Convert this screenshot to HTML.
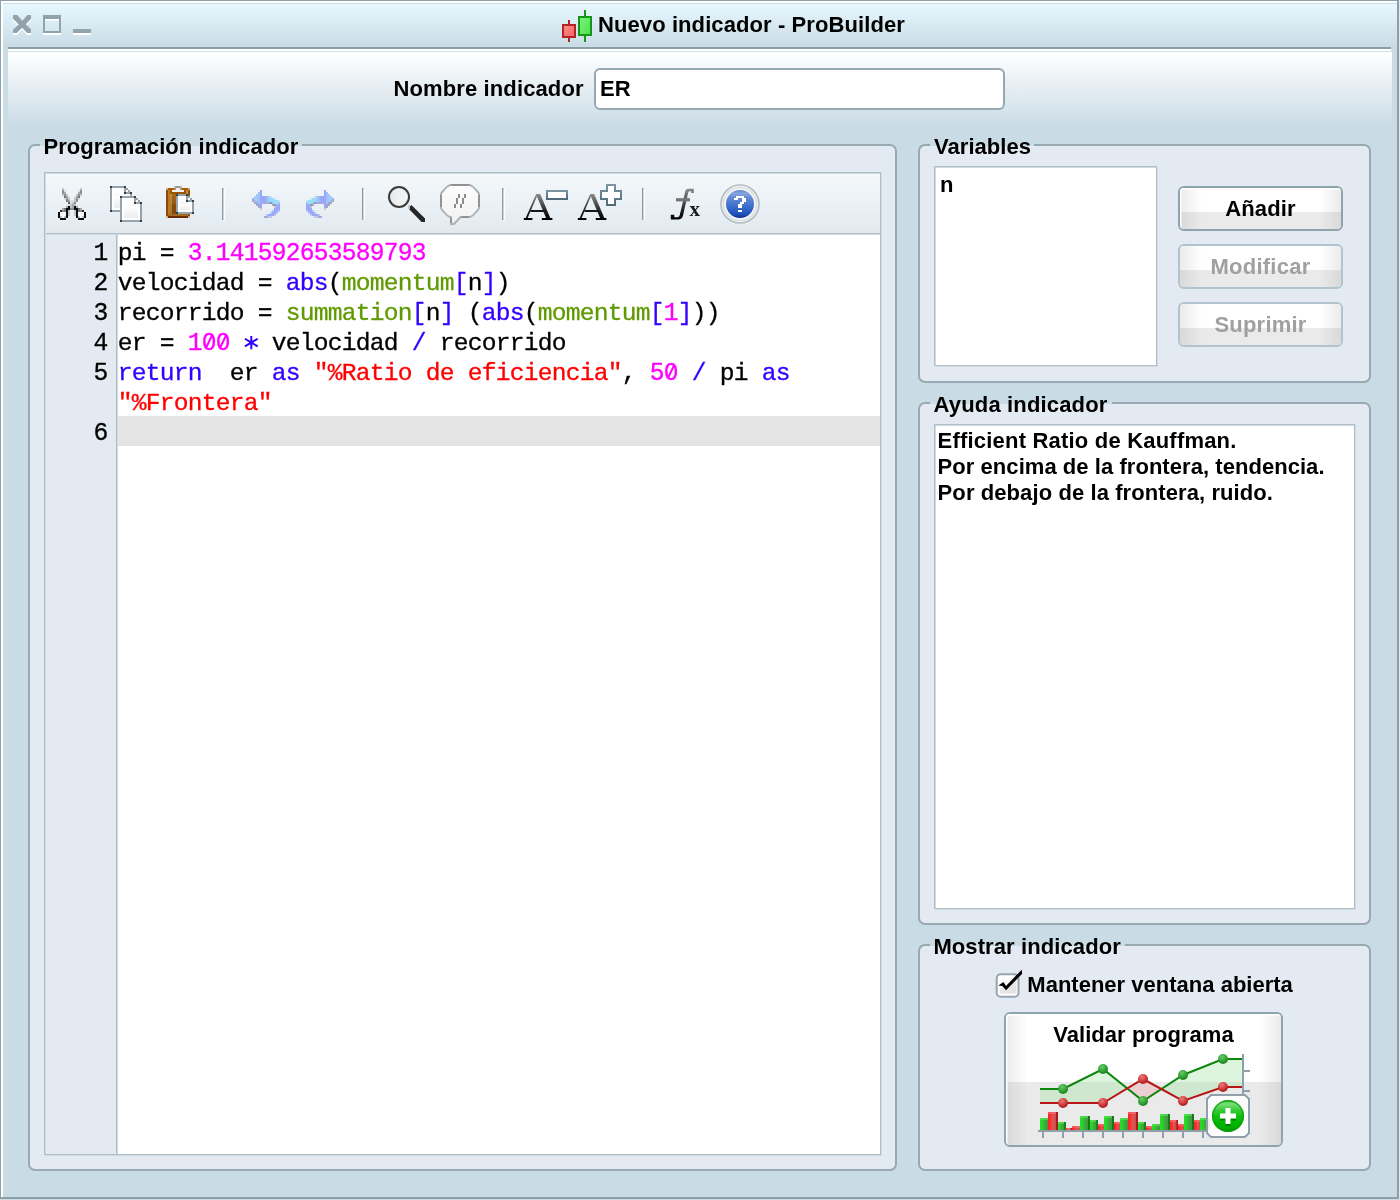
<!DOCTYPE html>
<html lang="es">
<head>
<meta charset="utf-8">
<title>Nuevo indicador - ProBuilder</title>
<style>
*{box-sizing:border-box;margin:0;padding:0}
html,body{width:1400px;height:1200px;overflow:hidden;background:#c9dbe5}
body{will-change:transform;font-variant-ligatures:none;font-feature-settings:"liga" 0,"clig" 0;position:relative;letter-spacing:0.05px;font-family:"Liberation Sans",sans-serif;font-weight:bold;font-size:22px;color:#000;line-height:26px}
.abs{position:absolute}
/* window frame */
#frame-gray{left:0;top:0;width:1399px;height:1199px;border:solid #8f9fa8;border-width:1px 2px 2px 1px}
#frame-white{left:1px;top:1px;width:1396px;height:1196px;border:solid #fff;border-width:2px 0 0 2px}
#outer-r{left:1399px;top:0;width:1px;height:1200px;background:#dcebf2}
#outer-b{left:0;top:1199px;width:1400px;height:1px;background:#c9dbe5}
#titlebar{left:3px;top:3px;width:1394px;height:44px;background:linear-gradient(#e7f9ff 0,#e5f6fd 3px,#c9dbe5 100%)}
#titlebar-top{left:3px;top:3px;width:1394px;height:1px;background:#c5dbe6}
#tsep{left:8px;top:47px;width:1383px;height:2px;background:#8a9ca6}
#tsep2{left:8px;top:49px;width:1383px;height:2px;background:#fff}
#tsep3{left:8px;top:51px;width:1384px;height:1px;background:#cfe0e9}
#content{left:8px;top:52px;width:1384px;height:1145px;background:linear-gradient(#ffffff 0,#c9dbe5 76px,#c9dbe5 100%)}
.t{white-space:pre}
/* fieldsets */
.fs{border:2px solid #99a9b1;border-radius:7px;background:#e3eaf2}
.legend{height:26px;line-height:26px;white-space:pre}
.lgap{height:2px;background:#c9dbe5}
.box{border:1px solid #b0bfc7;box-shadow:inset 1px 1px 0 #cfdae1,1px 1px 0 #cfdae1;background:#fff}
/* buttons */
.btn{border:2px solid #8fa3ad;border-radius:6px;overflow:hidden;background:#fff;text-align:center}
.btn.dis{border-color:#b1c4ce;color:#a0a0a0}
.btn .hi{position:absolute;left:0;top:0;width:100%;background:linear-gradient(90deg,#ebebeb 0,#fff 22px,#fff calc(100% - 22px),#ebebeb 100%)}
.btn .lo{position:absolute;left:0;bottom:0;width:100%;background:linear-gradient(90deg,#d9d9d9 0,#eaeaea 22px,#eaeaea calc(100% - 22px),#d9d9d9 100%)}
.btn.en::after{content:"";position:absolute;left:0;top:0;right:0;bottom:0;border-radius:4px;box-shadow:inset 1.5px 1.5px 0 #fff}
.btn .lbl{position:absolute;left:0;width:100%;text-align:center;white-space:pre}
/* code */
#code,.ln{font-family:"Liberation Mono",monospace;font-weight:normal;font-size:24.6px;letter-spacing:-0.7625px;line-height:30px;white-space:pre;color:#000;-webkit-text-stroke:0.3px currentColor}
.ln{text-align:right}
.n{color:#ff00ff}.n,.d{display:inline-block;transform:scaleY(1.08);transform-origin:0 21.56px}.d{transform:translateX(-0.6px) scaleY(1.08)}.k{color:#3200ff}.f{color:#5f9a00}.s{color:#ff0000}.b{color:#3200ff}
</style>
</head>
<body>
<div class="abs" id="titlebar"></div>
<div class="abs" id="titlebar-top"></div>
<div class="abs" id="content"></div>
<div class="abs" id="tsep"></div>
<div class="abs" id="tsep2"></div>
<div class="abs" id="tsep3"></div>
<div class="abs" id="frame-white"></div>
<div class="abs" id="frame-gray"></div>
<div class="abs" id="outer-r"></div>
<div class="abs" id="outer-b"></div>

<!-- title bar controls -->
<svg class="abs" style="left:10px;top:12px" width="90" height="26" viewBox="10 12 90 26">
  <g fill="#fff">
    <path transform="translate(0 2)" d="M13 15 L17.200 15 L22.300 20.800 L27.500 15 L31 15 L31 18.800 L25.900 24.200 L31 29.400 L31 33 L27.200 33 L22 27.800 L16.800 33 L13 33 L13 29.800 L18.700 24.400 L13 18.800 Z"/>
    <rect x="43" y="33" width="18" height="2"/><rect x="45" y="19" width="14" height="1.500"/>
    <rect x="73" y="31" width="18" height="4"/>
  </g>
  <g fill="#93a3ab">
    <path d="M13 15 L17.200 15 L22.300 20.800 L27.500 15 L31 15 L31 18.800 L25.900 24.200 L31 29.400 L31 33 L27.200 33 L22 27.800 L16.800 33 L13 33 L13 29.800 L18.700 24.400 L13 18.800 Z"/>
    <path d="M43 15 H61 V33 H43 Z M45 19 V31 H59 V19 Z" fill-rule="evenodd"/>
    <rect x="73" y="29" width="18" height="4"/>
  </g>
</svg>

<!-- title icon + text -->
<svg class="abs" style="left:560px;top:8px" width="36" height="38" viewBox="560 8 36 38">
  <defs>
    <linearGradient id="cr" x1="0" y1="0" x2="1" y2="1"><stop offset="0" stop-color="#ff8c8c"/><stop offset="1" stop-color="#f26464"/></linearGradient>
    <linearGradient id="cg" x1="0" y1="0" x2="1" y2="1"><stop offset="0" stop-color="#7af57a"/><stop offset="1" stop-color="#4fe04f"/></linearGradient>
  </defs>
  <rect x="568" y="20" width="2" height="22" fill="#b32424"/>
  <rect x="563" y="25" width="12" height="12" fill="url(#cr)" stroke="#b32424" stroke-width="2"/>
  <rect x="584" y="10" width="2" height="32" fill="#169616"/>
  <rect x="579" y="17" width="12" height="18" fill="url(#cg)" stroke="#169616" stroke-width="2"/>
</svg>
<div class="abs t" id="title" style="left:598px;top:12px;letter-spacing:0.09px">Nuevo indicador - ProBuilder</div>

<!-- name row -->
<div class="abs t" style="left:393.5px;top:76px;letter-spacing:0.12px">Nombre indicador</div>
<div class="abs" style="left:594px;top:68px;width:411px;height:41.5px;border:2px solid #96a8b1;border-radius:6px;background:#fff"></div>
<div class="abs t" style="left:600px;top:76px">ER</div>

<!-- Programación fieldset -->
<div class="abs fs" style="left:28px;top:144px;width:869px;height:1027px"></div>
<div class="abs lgap" style="left:40px;top:144px;width:262px"></div>
<div class="abs legend" style="left:43.4px;top:134px;letter-spacing:0.09px">Programación indicador</div>

<!-- editor box -->
<div class="abs box" style="left:44px;top:172px;width:837px;height:983px"></div>
<div class="abs" id="toolbar" style="left:46px;top:174px;width:834px;height:59px;background:linear-gradient(#f4f8fb,#e2eaf0)"></div>
<div class="abs" style="left:46px;top:233px;width:834px;height:2px;background:linear-gradient(#b0bfc7 50%,#cfdae1 50%)"></div>
<!--TOOLBAR--><svg class="abs" id="tbicons" style="left:46px;top:174px" width="834" height="59" viewBox="46 174 834 59"><defs>
<linearGradient id="pg" x1="0" y1="0" x2="0" y2="1"><stop offset="0" stop-color="#fff"/><stop offset="1" stop-color="#ececec"/></linearGradient>
<linearGradient id="cb" x1="0" y1="0" x2="0" y2="1"><stop offset="0" stop-color="#ac6e20"/><stop offset="0.5" stop-color="#9a5c18"/><stop offset="0.55" stop-color="#8a4c10"/><stop offset="1" stop-color="#82440e"/></linearGradient>
<linearGradient id="cbs" x1="0" y1="0" x2="0" y2="1"><stop offset="0" stop-color="#cc9440"/><stop offset="1" stop-color="#a66c22"/></linearGradient>
<linearGradient id="ag" x1="0" y1="0" x2="0" y2="1"><stop offset="0" stop-color="#8a8a8a"/><stop offset="0.5" stop-color="#444"/><stop offset="0.8" stop-color="#111"/><stop offset="1" stop-color="#000"/></linearGradient>
<linearGradient id="ag2" gradientUnits="userSpaceOnUse" x1="0" y1="194" x2="0" y2="220"><stop offset="0" stop-color="#8c8c8c"/><stop offset="0.35" stop-color="#555"/><stop offset="0.7" stop-color="#1c1c1c"/><stop offset="1" stop-color="#000"/></linearGradient>
<linearGradient id="hb" x1="0" y1="0" x2="0" y2="1"><stop offset="0" stop-color="#5a84d2"/><stop offset="0.12" stop-color="#86a6de"/><stop offset="0.3" stop-color="#6088d4"/><stop offset="0.6" stop-color="#3c6ccc"/><stop offset="0.88" stop-color="#1e50b8"/><stop offset="1" stop-color="#0a2a8a"/></linearGradient>
<linearGradient id="gl" x1="0" y1="0" x2="1" y2="0"><stop offset="0" stop-color="#e4e6e8"/><stop offset="0.5" stop-color="#eef0f1"/><stop offset="1" stop-color="#f4f5f6"/></linearGradient>
<linearGradient id="bb" x1="0" y1="0" x2="0" y2="1"><stop offset="0" stop-color="#fdfdfd"/><stop offset="1" stop-color="#f1f1f1"/></linearGradient>
<linearGradient id="pl" x1="0" y1="0" x2="0" y2="1"><stop offset="0" stop-color="#7a94a2"/><stop offset="1" stop-color="#506a7a"/></linearGradient>
<filter id="soft2" x="-5%" y="-5%" width="110%" height="110%"><feGaussianBlur stdDeviation="0.3"/></filter>
<filter id="soft" x="-5%" y="-5%" width="110%" height="110%"><feGaussianBlur stdDeviation="0.45"/></filter>
</defs><g filter="url(#soft)"><rect x="62" y="188" width="2" height="2" fill="#c2c4c6"/><rect x="80" y="188" width="2" height="2" fill="#c2c4c6"/><rect x="62" y="190" width="2" height="2" fill="#8e9092"/><rect x="64" y="190" width="2" height="2" fill="#dcdfe1"/><rect x="78" y="190" width="2" height="2" fill="#dcdfe1"/><rect x="80" y="190" width="2" height="2" fill="#8e9092"/><rect x="62" y="192" width="2" height="2" fill="#8e9092"/><rect x="64" y="192" width="2" height="2" fill="#a6a8aa"/><rect x="78" y="192" width="2" height="2" fill="#a6a8aa"/><rect x="80" y="192" width="2" height="2" fill="#8e9092"/><rect x="62" y="194" width="2" height="2" fill="#c2c4c6"/><rect x="64" y="194" width="2" height="2" fill="#8e9092"/><rect x="66" y="194" width="2" height="2" fill="#c2c4c6"/><rect x="76" y="194" width="2" height="2" fill="#c2c4c6"/><rect x="78" y="194" width="2" height="2" fill="#8e9092"/><rect x="80" y="194" width="2" height="2" fill="#c2c4c6"/><rect x="64" y="196" width="2" height="2" fill="#767778"/><rect x="66" y="196" width="2" height="2" fill="#a6a8aa"/><rect x="68" y="196" width="2" height="2" fill="#dcdfe1"/><rect x="74" y="196" width="2" height="2" fill="#dcdfe1"/><rect x="76" y="196" width="2" height="2" fill="#a6a8aa"/><rect x="78" y="196" width="2" height="2" fill="#767778"/><rect x="64" y="198" width="2" height="2" fill="#dcdfe1"/><rect x="66" y="198" width="2" height="2" fill="#8e9092"/><rect x="68" y="198" width="2" height="2" fill="#c2c4c6"/><rect x="74" y="198" width="2" height="2" fill="#c2c4c6"/><rect x="76" y="198" width="2" height="2" fill="#8e9092"/><rect x="78" y="198" width="2" height="2" fill="#dcdfe1"/><rect x="66" y="200" width="2" height="2" fill="#767778"/><rect x="68" y="200" width="2" height="2" fill="#a6a8aa"/><rect x="70" y="200" width="4" height="2" fill="#dcdfe1"/><rect x="74" y="200" width="2" height="2" fill="#c2c4c6"/><rect x="76" y="200" width="2" height="2" fill="#8e9092"/><rect x="68" y="202" width="2" height="2" fill="#5e5f60"/><rect x="70" y="202" width="2" height="2" fill="#dcdfe1"/><rect x="72" y="202" width="2" height="2" fill="#c2c4c6"/><rect x="74" y="202" width="2" height="2" fill="#8e9092"/><rect x="68" y="204" width="2" height="2" fill="#dcdfe1"/><rect x="70" y="204" width="2" height="2" fill="#c2c4c6"/><rect x="72" y="204" width="2" height="2" fill="#a6a8aa"/><rect x="74" y="204" width="2" height="2" fill="#c2c4c6"/><rect x="66" y="206" width="2" height="2" fill="#a6a8aa"/><rect x="68" y="206" width="2" height="2" fill="#0a0a0a"/><rect x="70" y="206" width="2" height="2" fill="#c2c4c6"/><rect x="72" y="206" width="2" height="2" fill="#a6a8aa"/><rect x="74" y="206" width="2" height="2" fill="#0a0a0a"/><rect x="76" y="206" width="2" height="2" fill="#a6a8aa"/><rect x="62" y="208" width="2" height="2" fill="#a6a8aa"/><rect x="64" y="208" width="2" height="2" fill="#767778"/><rect x="66" y="208" width="4" height="2" fill="#0a0a0a"/><rect x="70" y="208" width="4" height="2" fill="#8e9092"/><rect x="74" y="208" width="4" height="2" fill="#0a0a0a"/><rect x="78" y="208" width="2" height="2" fill="#767778"/><rect x="80" y="208" width="2" height="2" fill="#a6a8aa"/><rect x="60" y="210" width="2" height="2" fill="#2a2a2a"/><rect x="62" y="210" width="2" height="2" fill="#8e9092"/><rect x="64" y="210" width="2" height="2" fill="#767778"/><rect x="66" y="210" width="2" height="2" fill="#0a0a0a"/><rect x="68" y="210" width="2" height="2" fill="#c2c4c6"/><rect x="74" y="210" width="2" height="2" fill="#c2c4c6"/><rect x="76" y="210" width="2" height="2" fill="#0a0a0a"/><rect x="78" y="210" width="2" height="2" fill="#767778"/><rect x="80" y="210" width="2" height="2" fill="#8e9092"/><rect x="82" y="210" width="2" height="2" fill="#2a2a2a"/><rect x="58" y="212" width="2" height="2" fill="#0a0a0a"/><rect x="60" y="212" width="6" height="2" fill="#f6f8fa"/><rect x="66" y="212" width="2" height="2" fill="#0a0a0a"/><rect x="68" y="212" width="2" height="2" fill="#c2c4c6"/><rect x="74" y="212" width="2" height="2" fill="#c2c4c6"/><rect x="76" y="212" width="2" height="2" fill="#0a0a0a"/><rect x="78" y="212" width="6" height="2" fill="#f6f8fa"/><rect x="84" y="212" width="2" height="2" fill="#0a0a0a"/><rect x="58" y="214" width="2" height="2" fill="#0a0a0a"/><rect x="60" y="214" width="6" height="2" fill="#f6f8fa"/><rect x="66" y="214" width="2" height="2" fill="#0a0a0a"/><rect x="68" y="214" width="2" height="2" fill="#c2c4c6"/><rect x="74" y="214" width="2" height="2" fill="#c2c4c6"/><rect x="76" y="214" width="2" height="2" fill="#0a0a0a"/><rect x="78" y="214" width="6" height="2" fill="#f6f8fa"/><rect x="84" y="214" width="2" height="2" fill="#0a0a0a"/><rect x="58" y="216" width="2" height="2" fill="#0a0a0a"/><rect x="60" y="216" width="2" height="2" fill="#c2c4c6"/><rect x="62" y="216" width="2" height="2" fill="#f6f8fa"/><rect x="64" y="216" width="2" height="2" fill="#c2c4c6"/><rect x="66" y="216" width="2" height="2" fill="#0a0a0a"/><rect x="76" y="216" width="2" height="2" fill="#0a0a0a"/><rect x="78" y="216" width="2" height="2" fill="#c2c4c6"/><rect x="80" y="216" width="2" height="2" fill="#f6f8fa"/><rect x="82" y="216" width="2" height="2" fill="#c2c4c6"/><rect x="84" y="216" width="2" height="2" fill="#0a0a0a"/><rect x="60" y="218" width="6" height="2" fill="#0a0a0a"/><rect x="78" y="218" width="6" height="2" fill="#0a0a0a"/></g><g filter="url(#soft)"><path d="M111 187 h14 l6 6 v18 h-20 z" fill="#fff"/><rect x="114" y="190" width="12" height="18" fill="url(#pg)"/><rect x="114" y="196" width="14" height="12" fill="url(#pg)"/><rect x="110" y="186" width="16" height="2" fill="#97a3ac"/><rect x="110" y="186" width="2" height="26" fill="#97a3ac"/><rect x="110" y="210" width="22" height="2" fill="#97a3ac"/><rect x="130" y="192" width="2" height="20" fill="#97a3ac"/><rect x="124" y="188" width="2" height="6" fill="#97a3ac"/><rect x="124" y="192" width="6" height="2" fill="#97a3ac"/><rect x="126" y="188" width="2" height="2" fill="#97a3ac"/><rect x="128" y="190" width="2" height="2" fill="#97a3ac"/><rect x="126" y="190" width="2" height="2" fill="#fff"/><rect x="110" y="186" width="2" height="2" fill="#2f3f4a"/><rect x="124" y="186" width="2" height="2" fill="#2f3f4a"/><rect x="124" y="192" width="2" height="2" fill="#2f3f4a"/><rect x="130" y="192" width="2" height="2" fill="#2f3f4a"/><rect x="110" y="210" width="2" height="2" fill="#2f3f4a"/><rect x="130" y="210" width="2" height="2" fill="#2f3f4a"/><path d="M121 197 h14 l6 6 v18 h-20 z" fill="#fff"/><rect x="124" y="200" width="12" height="18" fill="url(#pg)"/><rect x="124" y="206" width="14" height="12" fill="url(#pg)"/><rect x="120" y="196" width="16" height="2" fill="#97a3ac"/><rect x="120" y="196" width="2" height="26" fill="#97a3ac"/><rect x="120" y="220" width="22" height="2" fill="#97a3ac"/><rect x="140" y="202" width="2" height="20" fill="#97a3ac"/><rect x="134" y="198" width="2" height="6" fill="#97a3ac"/><rect x="134" y="202" width="6" height="2" fill="#97a3ac"/><rect x="136" y="198" width="2" height="2" fill="#97a3ac"/><rect x="138" y="200" width="2" height="2" fill="#97a3ac"/><rect x="136" y="200" width="2" height="2" fill="#fff"/><rect x="120" y="196" width="2" height="2" fill="#2f3f4a"/><rect x="134" y="196" width="2" height="2" fill="#2f3f4a"/><rect x="134" y="202" width="2" height="2" fill="#2f3f4a"/><rect x="140" y="202" width="2" height="2" fill="#2f3f4a"/><rect x="120" y="220" width="2" height="2" fill="#2f3f4a"/><rect x="140" y="220" width="2" height="2" fill="#2f3f4a"/></g><g filter="url(#soft)"><rect x="166" y="188" width="24" height="30" fill="url(#cb)"/><rect x="166" y="188" width="2" height="30" fill="#8c4a08"/><rect x="168" y="190" width="2" height="26" fill="#b87a2a"/><rect x="170" y="190" width="2" height="26" fill="url(#cbs)"/><rect x="188" y="188" width="2" height="30" fill="#9a5004"/><rect x="184" y="190" width="4" height="6" fill="#c08a3c"/><rect x="166" y="188" width="24" height="2" fill="#a85c04"/><rect x="170" y="190" width="16" height="4" fill="#9a5606"/><rect x="168" y="214" width="20" height="2" fill="#a46c22"/><rect x="166" y="216" width="24" height="2" fill="#6e2c00"/><rect x="166" y="188" width="2" height="2" fill="#d4a878"/><rect x="188" y="188" width="2" height="2" fill="#d4a878"/><rect x="166" y="216" width="2" height="2" fill="#d4a878"/><rect x="188" y="216" width="2" height="2" fill="#d4a878"/><rect x="174" y="186" width="8" height="2" fill="#b4b6b8"/><rect x="176" y="186" width="4" height="2" fill="#9a9c9e"/><rect x="174" y="188" width="2" height="2" fill="#c09058"/><rect x="180" y="188" width="2" height="2" fill="#c09058"/><rect x="176" y="188" width="4" height="2" fill="#f0f0f0"/><rect x="172" y="190" width="12" height="2" fill="#f2f5f8"/><path d="M177 195 h10 l6 6 v12 h-16 z" fill="#fff"/><rect x="180" y="198" width="8" height="12" fill="url(#pg)"/><rect x="180" y="204" width="10" height="6" fill="url(#pg)"/><rect x="176" y="194" width="12" height="2" fill="#97a3ac"/><rect x="176" y="194" width="2" height="20" fill="#97a3ac"/><rect x="176" y="212" width="18" height="2" fill="#97a3ac"/><rect x="192" y="200" width="2" height="14" fill="#97a3ac"/><rect x="186" y="196" width="2" height="6" fill="#97a3ac"/><rect x="186" y="200" width="6" height="2" fill="#97a3ac"/><rect x="188" y="196" width="2" height="2" fill="#97a3ac"/><rect x="190" y="198" width="2" height="2" fill="#97a3ac"/><rect x="188" y="198" width="2" height="2" fill="#fff"/><rect x="176" y="194" width="2" height="2" fill="#2f3f4a"/><rect x="186" y="194" width="2" height="2" fill="#2f3f4a"/><rect x="186" y="200" width="2" height="2" fill="#2f3f4a"/><rect x="192" y="200" width="2" height="2" fill="#2f3f4a"/><rect x="176" y="212" width="2" height="2" fill="#2f3f4a"/><rect x="192" y="212" width="2" height="2" fill="#2f3f4a"/></g><rect x="222" y="188" width="1.6" height="32" fill="#8b9ba4"/><rect x="223.6" y="189" width="1.6" height="31" fill="#fbfdfe"/><g filter="url(#soft)"><rect x="260" y="190" width="2" height="2" fill="#98a8f8"/><rect x="258" y="192" width="2" height="2" fill="#a0c0f8"/><rect x="260" y="192" width="2" height="2" fill="#98a8f8"/><rect x="256" y="194" width="2" height="2" fill="#a0c8f8"/><rect x="258" y="194" width="2" height="2" fill="#a0c0f8"/><rect x="260" y="194" width="2" height="2" fill="#98a8f8"/><rect x="254" y="196" width="2" height="2" fill="#a0d2f8"/><rect x="256" y="196" width="2" height="2" fill="#a0c8f8"/><rect x="258" y="196" width="2" height="2" fill="#a0c0f8"/><rect x="260" y="196" width="6" height="2" fill="#98a8f8"/><rect x="266" y="196" width="2" height="2" fill="#a0b8f8"/><rect x="268" y="196" width="2" height="2" fill="#aacaf8"/><rect x="270" y="196" width="2" height="2" fill="#c6e4f8"/><rect x="252" y="198" width="2" height="2" fill="#a0a8f0"/><rect x="254" y="198" width="2" height="2" fill="#a0d2f8"/><rect x="256" y="198" width="2" height="2" fill="#a0c8f8"/><rect x="258" y="198" width="2" height="2" fill="#a0c0f8"/><rect x="260" y="198" width="6" height="2" fill="#98a8f8"/><rect x="266" y="198" width="2" height="2" fill="#a0b8f8"/><rect x="268" y="198" width="2" height="2" fill="#98d0f8"/><rect x="270" y="198" width="4" height="2" fill="#98dcf8"/><rect x="274" y="198" width="2" height="2" fill="#c6e4f8"/><rect x="252" y="200" width="2" height="2" fill="#a8aaae"/><rect x="254" y="200" width="2" height="2" fill="#98c0f8"/><rect x="256" y="200" width="2" height="2" fill="#a0c8f8"/><rect x="258" y="200" width="2" height="2" fill="#a0c0f8"/><rect x="260" y="200" width="6" height="2" fill="#98a8f8"/><rect x="266" y="200" width="2" height="2" fill="#a0b8f8"/><rect x="268" y="200" width="2" height="2" fill="#98d0f8"/><rect x="270" y="200" width="8" height="2" fill="#98dcf8"/><rect x="278" y="200" width="2" height="2" fill="#c6e4f8"/><rect x="254" y="202" width="2" height="2" fill="#a8aaae"/><rect x="256" y="202" width="2" height="2" fill="#98a0f0"/><rect x="258" y="202" width="2" height="2" fill="#a0c0f8"/><rect x="260" y="202" width="2" height="2" fill="#98a8f8"/><rect x="262" y="202" width="8" height="2" fill="#a2aae0"/><rect x="270" y="202" width="2" height="2" fill="#8890c8"/><rect x="272" y="202" width="2" height="2" fill="#98c8f8"/><rect x="274" y="202" width="4" height="2" fill="#98dcf8"/><rect x="278" y="202" width="2" height="2" fill="#98c8f8"/><rect x="256" y="204" width="2" height="2" fill="#a8aaae"/><rect x="258" y="204" width="2" height="2" fill="#98a0f0"/><rect x="260" y="204" width="2" height="2" fill="#98a8f8"/><rect x="272" y="204" width="2" height="2" fill="#a8aaae"/><rect x="274" y="204" width="2" height="2" fill="#8890c8"/><rect x="276" y="204" width="2" height="2" fill="#a0b8f8"/><rect x="278" y="204" width="2" height="2" fill="#98a8f8"/><rect x="258" y="206" width="2" height="2" fill="#a8aaae"/><rect x="260" y="206" width="2" height="2" fill="#98a8f8"/><rect x="274" y="206" width="2" height="2" fill="#c6c8ce"/><rect x="276" y="206" width="4" height="2" fill="#98a8f8"/><rect x="260" y="208" width="2" height="2" fill="#c6c8ce"/><rect x="274" y="208" width="2" height="2" fill="#a0a8f0"/><rect x="276" y="208" width="4" height="2" fill="#98a8f8"/><rect x="272" y="210" width="2" height="2" fill="#aacaf8"/><rect x="274" y="210" width="4" height="2" fill="#98a8f8"/><rect x="278" y="210" width="2" height="2" fill="#bccaf2"/><rect x="270" y="212" width="2" height="2" fill="#aacaf8"/><rect x="272" y="212" width="4" height="2" fill="#98a8f8"/><rect x="276" y="212" width="2" height="2" fill="#bccaf2"/><rect x="266" y="214" width="2" height="2" fill="#bccaf2"/><rect x="268" y="214" width="4" height="2" fill="#98a8f8"/><rect x="272" y="214" width="2" height="2" fill="#a2aae0"/><rect x="274" y="214" width="2" height="2" fill="#bccaf2"/><rect x="264" y="216" width="4" height="2" fill="#a2aae0"/><rect x="268" y="216" width="2" height="2" fill="#c6c8ce"/><rect x="270" y="216" width="2" height="2" fill="#bccaf2"/></g><g filter="url(#soft)"><rect x="324" y="190" width="2" height="2" fill="#98a8f8"/><rect x="326" y="192" width="2" height="2" fill="#a0c0f8"/><rect x="324" y="192" width="2" height="2" fill="#98a8f8"/><rect x="328" y="194" width="2" height="2" fill="#a0c8f8"/><rect x="326" y="194" width="2" height="2" fill="#a0c0f8"/><rect x="324" y="194" width="2" height="2" fill="#98a8f8"/><rect x="330" y="196" width="2" height="2" fill="#a0d2f8"/><rect x="328" y="196" width="2" height="2" fill="#a0c8f8"/><rect x="326" y="196" width="2" height="2" fill="#a0c0f8"/><rect x="320" y="196" width="6" height="2" fill="#98a8f8"/><rect x="318" y="196" width="2" height="2" fill="#a0b8f8"/><rect x="316" y="196" width="2" height="2" fill="#aacaf8"/><rect x="314" y="196" width="2" height="2" fill="#c6e4f8"/><rect x="332" y="198" width="2" height="2" fill="#a0a8f0"/><rect x="330" y="198" width="2" height="2" fill="#a0d2f8"/><rect x="328" y="198" width="2" height="2" fill="#a0c8f8"/><rect x="326" y="198" width="2" height="2" fill="#a0c0f8"/><rect x="320" y="198" width="6" height="2" fill="#98a8f8"/><rect x="318" y="198" width="2" height="2" fill="#a0b8f8"/><rect x="316" y="198" width="2" height="2" fill="#98d0f8"/><rect x="312" y="198" width="4" height="2" fill="#98dcf8"/><rect x="310" y="198" width="2" height="2" fill="#c6e4f8"/><rect x="332" y="200" width="2" height="2" fill="#a8aaae"/><rect x="330" y="200" width="2" height="2" fill="#98c0f8"/><rect x="328" y="200" width="2" height="2" fill="#a0c8f8"/><rect x="326" y="200" width="2" height="2" fill="#a0c0f8"/><rect x="320" y="200" width="6" height="2" fill="#98a8f8"/><rect x="318" y="200" width="2" height="2" fill="#a0b8f8"/><rect x="316" y="200" width="2" height="2" fill="#98d0f8"/><rect x="308" y="200" width="8" height="2" fill="#98dcf8"/><rect x="306" y="200" width="2" height="2" fill="#c6e4f8"/><rect x="330" y="202" width="2" height="2" fill="#a8aaae"/><rect x="328" y="202" width="2" height="2" fill="#98a0f0"/><rect x="326" y="202" width="2" height="2" fill="#a0c0f8"/><rect x="324" y="202" width="2" height="2" fill="#98a8f8"/><rect x="316" y="202" width="8" height="2" fill="#a2aae0"/><rect x="314" y="202" width="2" height="2" fill="#8890c8"/><rect x="312" y="202" width="2" height="2" fill="#98c8f8"/><rect x="308" y="202" width="4" height="2" fill="#98dcf8"/><rect x="306" y="202" width="2" height="2" fill="#98c8f8"/><rect x="328" y="204" width="2" height="2" fill="#a8aaae"/><rect x="326" y="204" width="2" height="2" fill="#98a0f0"/><rect x="324" y="204" width="2" height="2" fill="#98a8f8"/><rect x="312" y="204" width="2" height="2" fill="#a8aaae"/><rect x="310" y="204" width="2" height="2" fill="#8890c8"/><rect x="308" y="204" width="2" height="2" fill="#a0b8f8"/><rect x="306" y="204" width="2" height="2" fill="#98a8f8"/><rect x="326" y="206" width="2" height="2" fill="#a8aaae"/><rect x="324" y="206" width="2" height="2" fill="#98a8f8"/><rect x="310" y="206" width="2" height="2" fill="#c6c8ce"/><rect x="306" y="206" width="4" height="2" fill="#98a8f8"/><rect x="324" y="208" width="2" height="2" fill="#c6c8ce"/><rect x="310" y="208" width="2" height="2" fill="#a0a8f0"/><rect x="306" y="208" width="4" height="2" fill="#98a8f8"/><rect x="312" y="210" width="2" height="2" fill="#aacaf8"/><rect x="308" y="210" width="4" height="2" fill="#98a8f8"/><rect x="306" y="210" width="2" height="2" fill="#bccaf2"/><rect x="314" y="212" width="2" height="2" fill="#aacaf8"/><rect x="310" y="212" width="4" height="2" fill="#98a8f8"/><rect x="308" y="212" width="2" height="2" fill="#bccaf2"/><rect x="318" y="214" width="2" height="2" fill="#bccaf2"/><rect x="314" y="214" width="4" height="2" fill="#98a8f8"/><rect x="312" y="214" width="2" height="2" fill="#a2aae0"/><rect x="310" y="214" width="2" height="2" fill="#bccaf2"/><rect x="318" y="216" width="4" height="2" fill="#a2aae0"/><rect x="316" y="216" width="2" height="2" fill="#c6c8ce"/><rect x="314" y="216" width="2" height="2" fill="#bccaf2"/></g><rect x="362" y="188" width="1.6" height="32" fill="#8b9ba4"/><rect x="363.6" y="189" width="1.6" height="31" fill="#fbfdfe"/><g filter="url(#soft)"><circle cx="399" cy="197" r="10" fill="url(#gl)" stroke="#3a3a3a" stroke-width="2"/><path d="M408.200 208.200 L411.400 205 L425 218.600 L425 222 L421.600 222 Z" fill="#262626"/><rect x="408" y="205" width="2" height="4" fill="#c8c8cc"/></g><g filter="url(#soft)"><path d="M450 185 H470 Q473 186 476 190 Q478.500 192.500 479 194 V208 Q478.500 209.500 476 212 Q473 216 470 217 H460.500 L454 224 H451 V217 H450 Q447 216 444 212 Q441.500 209.500 441 208 V194 Q441.500 192.500 444 190 Q447 186 450 185 Z" fill="url(#bb)" stroke="#adb1b3" stroke-width="1.9" stroke-linejoin="round"/><path d="M451 185 H469 M441 195 V207 M479 195 V207 M461.500 217 H469 M451 218 V223" fill="none" stroke="#909496" stroke-width="2"/><rect x="458" y="194" width="2" height="4" fill="#8a8c8e"/><rect x="456" y="198" width="2" height="6" fill="#8a8c8e"/><rect x="454" y="204" width="2" height="4" fill="#8a8c8e"/><rect x="464" y="194" width="2" height="4" fill="#8a8c8e"/><rect x="462" y="198" width="2" height="6" fill="#8a8c8e"/><rect x="460" y="204" width="2" height="4" fill="#8a8c8e"/></g><rect x="502" y="188" width="1.6" height="32" fill="#8b9ba4"/><rect x="503.6" y="189" width="1.6" height="31" fill="#fbfdfe"/><g transform="translate(0 0)" filter="url(#soft2)"><path fill-rule="evenodd" d="M536.200 194 L540.200 194 L550.400 218.200 L525.600 218.200 Z M536.930 196.600 L546.200 218.200 L527.500 218.200 Z" fill="url(#ag2)"/><rect x="530.500" y="210" width="15" height="2" fill="#161616"/><rect x="523.800" y="218" width="8.600" height="2" fill="#000"/><rect x="541.800" y="218" width="10.600" height="2" fill="#000"/></g><g transform="translate(54 0)" filter="url(#soft2)"><path fill-rule="evenodd" d="M536.200 194 L540.200 194 L550.400 218.200 L525.600 218.200 Z M536.930 196.600 L546.200 218.200 L527.500 218.200 Z" fill="url(#ag2)"/><rect x="530.500" y="210" width="15" height="2" fill="#161616"/><rect x="523.800" y="218" width="8.600" height="2" fill="#000"/><rect x="541.800" y="218" width="10.600" height="2" fill="#000"/></g><rect x="547" y="191" width="20" height="8" fill="#fff" stroke="url(#pl)" stroke-width="2"/><path d="M607 185 H615 V191 H621 V199 H615 V205 H607 V199 H601 V191 H607 Z" fill="#fff" stroke="url(#pl)" stroke-width="2"/><rect x="642" y="188" width="1.6" height="32" fill="#8b9ba4"/><rect x="643.6" y="189" width="1.6" height="31" fill="#fbfdfe"/><g filter="url(#soft)"><path d="M693.800 193 V188.800 H688.500 Q685.800 188.800 685.200 191.500 L679.800 215 Q679.300 217.300 677 217.300 H674.300 V214.800 H670.800 V219.600 H678 Q682 219.600 683 215.500 L688.400 192 Q688.600 191.300 689.500 191.300 H691.200 V193 Z" fill="url(#ag)"/><rect x="676" y="198.200" width="14" height="3.200" fill="#747474"/><text x="689.500" y="215.800" font-family="Liberation Serif" font-weight="bold" font-size="21" fill="#1a1a1a">x</text></g><g filter="url(#soft)"><circle cx="740" cy="204" r="19" fill="#f6f7f7" stroke="#b3bdc2" stroke-width="1.7"/><circle cx="740" cy="204" r="16.500" fill="none" stroke="#d9dee0" stroke-width="1.500"/><circle cx="740" cy="204" r="14" fill="url(#hb)"/><path d="M736 196 H744 V198 H746 V202 H744 V204 H742 V208 H738 V204 H740 V202 H742 V198 H738 V200 H734 V198 H736 Z M738 210 H742 V212 H738 Z" fill="#fff"/></g></svg><!--/TOOLBAR-->
<div class="abs" id="gutter" style="left:46px;top:235px;width:70px;height:919px;background:#e3eaf2"></div>
<div class="abs" style="left:116px;top:235px;width:2px;height:919px;background:linear-gradient(90deg,#b0bfc7 50%,#cfdae1 50%)"></div>
<div class="abs" style="left:118px;top:416px;width:762px;height:30px;background:#e4e4e4"></div>
<div class="abs ln" style="left:46px;top:239px;width:62px"><span class="d">1</span>
<span class="d">2</span>
<span class="d">3</span>
<span class="d">4</span>
<span class="d">5</span>

<span class="d">6</span></div>
<div class="abs" id="code" style="left:117.8px;top:239px">pi = <span class="n">3.141592653589793</span>
velocidad = <span class="k">abs</span>(<span class="f">momentum</span><span class="b">[</span>n<span class="b">]</span>)
recorrido = <span class="f">summation</span><span class="b">[</span>n<span class="b">]</span> (<span class="k">abs</span>(<span class="f">momentum</span><span class="b">[</span><span class="n">1</span><span class="b">]</span>))
er = <span class="n">100</span>   velocidad <span class="k">/</span> recorrido
<span class="k">return</span>  er <span class="k">as</span> <span class="s">"%Ratio de eficiencia"</span>, <span class="n">50</span> <span class="k">/</span> pi <span class="k">as</span>
<span class="s">"%Frontera"</span></div>

<svg class="abs" id="glyphs" style="left:118px;top:326px" width="762" height="60" viewBox="118 326 762 60">
<g stroke="#3200ff" stroke-width="2" stroke-linecap="butt"><path d="M251.300 336 V349.200 M244.900 338.750 L257.700 346.450 M257.700 338.750 L244.900 346.450"/></g>
<g fill="#fff"><ellipse cx="209.300" cy="341.300" rx="2.300" ry="2.600"/><ellipse cx="223.300" cy="341.300" rx="2.300" ry="2.600"/><ellipse cx="671.300" cy="371.300" rx="2.300" ry="2.600"/></g><g stroke="#ff00ff" stroke-width="2.100"><path d="M206.500 346.900 L212.200 335.100 M220.500 346.900 L226.200 335.100 M668.500 376.900 L674.200 365.100"/></g>
</svg>

<!-- Variables fieldset -->
<div class="abs fs" style="left:918px;top:144px;width:453px;height:239px"></div>
<div class="abs lgap" style="left:930px;top:144px;width:104px"></div>
<div class="abs legend" style="left:934px;top:134px">Variables</div>
<div class="abs box" style="left:934px;top:166px;width:223px;height:200px"></div>
<div class="abs t" style="left:940px;top:172px">n</div>

<div class="abs btn en" style="left:1178px;top:186px;width:165px;height:45px"><div class="hi" style="height:24px"></div><div class="lo" style="height:17px"></div><div class="lbl" style="top:8px;letter-spacing:0.15px">Añadir</div></div>
<div class="abs btn dis" style="left:1178px;top:244px;width:165px;height:45px"><div class="hi" style="height:24px"></div><div class="lo" style="height:17px"></div><div class="lbl" style="top:8px;letter-spacing:0.25px">Modificar</div></div>
<div class="abs btn dis" style="left:1178px;top:302px;width:165px;height:45px"><div class="hi" style="height:24px"></div><div class="lo" style="height:17px"></div><div class="lbl" style="top:8px;letter-spacing:0.2px">Suprimir</div></div>

<!-- Ayuda fieldset -->
<div class="abs fs" style="left:918px;top:402px;width:453px;height:523px"></div>
<div class="abs lgap" style="left:930px;top:402px;width:182px"></div>
<div class="abs legend" style="left:933.6px;top:392px;letter-spacing:0.16px">Ayuda indicador</div>
<div class="abs box" style="left:934px;top:424px;width:421px;height:485px"></div>
<div class="abs t" style="left:937.6px;top:428px;letter-spacing:0.2px">Efficient Ratio de Kauffman.</div>
<div class="abs t" style="left:937.6px;top:454px">Por encima de la frontera, tendencia.</div>
<div class="abs t" style="left:937.6px;top:480px;letter-spacing:0.09px">Por debajo de la frontera, ruido.</div>

<!-- Mostrar fieldset -->
<div class="abs fs" style="left:918px;top:944px;width:453px;height:227px"></div>
<div class="abs lgap" style="left:930px;top:944px;width:195px"></div>
<div class="abs legend" style="left:933.4px;top:934px;letter-spacing:0.1px">Mostrar indicador</div>
<div class="abs t" style="left:1027.3px;top:972px;letter-spacing:0.01px">Mantener ventana abierta</div>
<div class="abs btn en" id="validar" style="left:1004px;top:1012px;width:279px;height:135px"><div class="hi" style="height:68px"></div><div class="lo" style="height:63px"></div><div class="lbl" style="top:8px">Validar programa</div></div>

<!--VALIDAR--><svg class="abs" id="chk" style="left:992px;top:966px" width="34" height="36" viewBox="992 966 34 36"><defs><linearGradient id="ck" x1="0" y1="0" x2="0.6" y2="1"><stop offset="0" stop-color="#fff"/><stop offset="0.5" stop-color="#f4f4f4"/><stop offset="0.52" stop-color="#e9e9e9"/><stop offset="1" stop-color="#e2e2e2"/></linearGradient></defs><rect x="996.700" y="974.300" width="21.800" height="22.500" rx="4" ry="4" fill="#fff" stroke="#95a6ae" stroke-width="2"/><rect x="1000" y="977.500" width="16.500" height="16" rx="1" fill="url(#ck)"/><path d="M998.300 985.500 L1003.500 982 L1006 985.900 L1021.700 969.800 L1022.200 973.700 L1006 990.200 L1002.300 986.100 Z" fill="#000"/></svg><svg class="abs" id="vicon" style="left:1036px;top:1050px" width="218" height="92" viewBox="1036 1050 218 92"><defs>
<radialGradient id="dg" cx="0.4" cy="0.3" r="0.75"><stop offset="0" stop-color="#6cc96c"/><stop offset="0.55" stop-color="#36a336"/><stop offset="1" stop-color="#167e16"/></radialGradient>
<radialGradient id="dr" cx="0.4" cy="0.3" r="0.75"><stop offset="0" stop-color="#ec7c7c"/><stop offset="0.55" stop-color="#d03c3c"/><stop offset="1" stop-color="#a31414"/></radialGradient>
<linearGradient id="bg" x1="0" y1="0" x2="1" y2="0"><stop offset="0" stop-color="#1fe01f"/><stop offset="0.3" stop-color="#2ad02a"/><stop offset="0.45" stop-color="#45a845"/><stop offset="0.8" stop-color="#3a9a3a"/><stop offset="0.82" stop-color="#167816"/><stop offset="1" stop-color="#167816"/></linearGradient>
<linearGradient id="br" x1="0" y1="0" x2="1" y2="0"><stop offset="0" stop-color="#ff2020"/><stop offset="0.3" stop-color="#f83434"/><stop offset="0.45" stop-color="#dc5656"/><stop offset="0.8" stop-color="#d24c4c"/><stop offset="0.82" stop-color="#a81c1c"/><stop offset="1" stop-color="#a81c1c"/></linearGradient>
<linearGradient id="pc" x1="0" y1="0" x2="0" y2="1"><stop offset="0" stop-color="#22b422"/><stop offset="0.12" stop-color="#7ade7a"/><stop offset="0.3" stop-color="#3ccc3c"/><stop offset="0.55" stop-color="#08bc08"/><stop offset="0.85" stop-color="#04b004"/><stop offset="1" stop-color="#069406"/></linearGradient>
<filter id="vs" x="-2%" y="-2%" width="104%" height="104%"><feGaussianBlur stdDeviation="0.4"/></filter>
</defs><g filter="url(#vs)"><path d="M1040.00 1089.00 L1063.00 1089.00 L1063.00 1103.00 L1040.00 1103.00 Z" fill="rgba(150,225,150,0.32)"/><path d="M1063.00 1089.00 L1103.00 1069.00 L1103.00 1103.00 L1063.00 1103.00 Z" fill="rgba(150,225,150,0.32)"/><path d="M1103.00 1069.00 L1127.29 1088.43 L1127.29 1088.43 L1103.00 1103.00 Z" fill="rgba(150,225,150,0.32)"/><path d="M1127.29 1088.43 L1143.00 1101.00 L1143.00 1079.00 L1127.29 1088.43 Z" fill="rgba(238,150,160,0.32)"/><path d="M1143.00 1101.00 L1161.33 1089.08 L1161.33 1089.08 L1143.00 1079.00 Z" fill="rgba(238,150,160,0.32)"/><path d="M1161.33 1089.08 L1183.00 1075.00 L1183.00 1101.00 L1161.33 1089.08 Z" fill="rgba(150,225,150,0.32)"/><path d="M1183.00 1075.00 L1223.00 1059.00 L1223.00 1087.00 L1183.00 1101.00 Z" fill="rgba(150,225,150,0.32)"/><path d="M1223.00 1059.00 L1242.00 1059.00 L1242.00 1087.00 L1223.00 1087.00 Z" fill="rgba(150,225,150,0.32)"/><rect x="1242" y="1054" width="2" height="40" fill="#8fa0ac"/><rect x="1244" y="1070" width="6" height="2" fill="#8fa0ac"/><rect x="1244" y="1090" width="6" height="2" fill="#8fa0ac"/><polyline points="1040,1089 1063,1089 1103,1069 1143,1101 1183,1075 1223,1059 1242,1059" fill="none" stroke="#0a860a" stroke-width="2"/><polyline points="1040,1103 1063,1103 1103,1103 1143,1079 1183,1101 1223,1087 1242,1087" fill="none" stroke="#b81616" stroke-width="2"/><circle cx="1063" cy="1089" r="5" fill="url(#dg)"/><circle cx="1103" cy="1069" r="5" fill="url(#dg)"/><circle cx="1143" cy="1101" r="5" fill="url(#dg)"/><circle cx="1183" cy="1075" r="5" fill="url(#dg)"/><circle cx="1223" cy="1059" r="5" fill="url(#dg)"/><circle cx="1063" cy="1103" r="5" fill="url(#dr)"/><circle cx="1103" cy="1103" r="5" fill="url(#dr)"/><circle cx="1143" cy="1079" r="5" fill="url(#dr)"/><circle cx="1183" cy="1101" r="5" fill="url(#dr)"/><circle cx="1223" cy="1087" r="5" fill="url(#dr)"/><rect x="1040" y="1118" width="10" height="12" fill="url(#bg)"/><rect x="1040" y="1118" width="8" height="2" fill="#5cf05c" opacity="0.55"/><rect x="1048" y="1112" width="10" height="18" fill="url(#br)"/><rect x="1048" y="1112" width="8" height="2" fill="#ff7c7c" opacity="0.55"/><rect x="1058" y="1122" width="8" height="8" fill="url(#bg)"/><rect x="1058" y="1122" width="6" height="2" fill="#5cf05c" opacity="0.55"/><rect x="1066" y="1128" width="6" height="2" fill="url(#br)"/><rect x="1066" y="1128" width="4" height="2" fill="#ff7c7c" opacity="0.55"/><rect x="1072" y="1126" width="10" height="4" fill="url(#br)"/><rect x="1072" y="1126" width="8" height="2" fill="#ff7c7c" opacity="0.55"/><rect x="1080" y="1116" width="10" height="14" fill="url(#bg)"/><rect x="1080" y="1116" width="8" height="2" fill="#5cf05c" opacity="0.55"/><rect x="1090" y="1120" width="8" height="10" fill="url(#bg)"/><rect x="1090" y="1120" width="6" height="2" fill="#5cf05c" opacity="0.55"/><rect x="1098" y="1124" width="8" height="6" fill="url(#br)"/><rect x="1098" y="1124" width="6" height="2" fill="#ff7c7c" opacity="0.55"/><rect x="1104" y="1116" width="10" height="14" fill="url(#bg)"/><rect x="1104" y="1116" width="8" height="2" fill="#5cf05c" opacity="0.55"/><rect x="1114" y="1122" width="8" height="8" fill="url(#br)"/><rect x="1114" y="1122" width="6" height="2" fill="#ff7c7c" opacity="0.55"/><rect x="1120" y="1118" width="10" height="12" fill="url(#bg)"/><rect x="1120" y="1118" width="8" height="2" fill="#5cf05c" opacity="0.55"/><rect x="1128" y="1112" width="10" height="18" fill="url(#br)"/><rect x="1128" y="1112" width="8" height="2" fill="#ff7c7c" opacity="0.55"/><rect x="1138" y="1122" width="8" height="8" fill="url(#bg)"/><rect x="1138" y="1122" width="6" height="2" fill="#5cf05c" opacity="0.55"/><rect x="1146" y="1126" width="8" height="4" fill="url(#br)"/><rect x="1146" y="1126" width="6" height="2" fill="#ff7c7c" opacity="0.55"/><rect x="1152" y="1124" width="10" height="6" fill="url(#bg)"/><rect x="1152" y="1124" width="8" height="2" fill="#5cf05c" opacity="0.55"/><rect x="1160" y="1114" width="10" height="16" fill="url(#bg)"/><rect x="1160" y="1114" width="8" height="2" fill="#5cf05c" opacity="0.55"/><rect x="1170" y="1120" width="8" height="10" fill="url(#br)"/><rect x="1170" y="1120" width="6" height="2" fill="#ff7c7c" opacity="0.55"/><rect x="1178" y="1124" width="8" height="6" fill="url(#br)"/><rect x="1178" y="1124" width="6" height="2" fill="#ff7c7c" opacity="0.55"/><rect x="1184" y="1114" width="10" height="16" fill="url(#bg)"/><rect x="1184" y="1114" width="8" height="2" fill="#5cf05c" opacity="0.55"/><rect x="1194" y="1120" width="8" height="10" fill="url(#br)"/><rect x="1194" y="1120" width="6" height="2" fill="#ff7c7c" opacity="0.55"/><rect x="1200" y="1118" width="10" height="12" fill="url(#bg)"/><rect x="1200" y="1118" width="8" height="2" fill="#5cf05c" opacity="0.55"/><rect x="1038" y="1130" width="170" height="2" fill="#8fa0ac"/><rect x="1042" y="1132" width="2" height="6" fill="#8fa0ac"/><rect x="1062" y="1132" width="2" height="6" fill="#8fa0ac"/><rect x="1082" y="1132" width="2" height="6" fill="#8fa0ac"/><rect x="1102" y="1132" width="2" height="6" fill="#8fa0ac"/><rect x="1122" y="1132" width="2" height="6" fill="#8fa0ac"/><rect x="1142" y="1132" width="2" height="6" fill="#8fa0ac"/><rect x="1162" y="1132" width="2" height="6" fill="#8fa0ac"/><rect x="1182" y="1132" width="2" height="6" fill="#8fa0ac"/><rect x="1202" y="1132" width="2" height="6" fill="#8fa0ac"/><path d="M1211 1095 H1245 L1249 1099 V1133 L1245 1137 H1211 L1207 1133 V1099 Z" fill="rgba(255,255,255,0.9)" stroke="#8fa0ac" stroke-width="2"/><circle cx="1228" cy="1116" r="16" fill="url(#pc)"/><circle cx="1228" cy="1116" r="15.300" fill="none" stroke="#0a9a0a" stroke-width="1.400" opacity="0.7"/><path d="M1220 1118.500 h16 v2 h-5.500 v5.500 h-5 v-5.500 h-5.500z" fill="#067006" opacity="0.8"/><path d="M1225.500 1108 h5 v5.500 h5.500 v5 h-5.500 v5.500 h-5 v-5.500 h-5.500 v-5 h5.500z" fill="#fff"/></g></svg><!--/VALIDAR-->
</body>
</html>
